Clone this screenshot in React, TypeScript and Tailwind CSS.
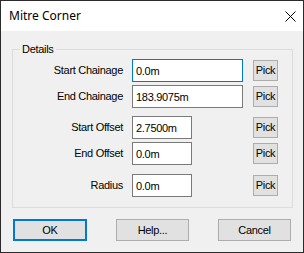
import React from "react";

function Row({
  label,
  value,
  wide,
  focused,
  className,
}: {
  label: string;
  value: string;
  wide?: boolean;
  focused?: boolean;
  className?: string;
}) {
  return (
    <div className={"flex items-center h-[23px] " + (className ?? "")}>
      <div className="w-[110px] text-right leading-[13px]">{label}</div>
      <div className="ml-[9px] w-[121px] h-[23px] flex">
        <input
          readOnly
          value={value}
          className={
            "h-[23px] pl-[3px] bg-white outline-none leading-[13px] text-[11px] tracking-[-0.3px] text-black border " +
            (wide ? "w-[111px] " : "w-[60px] ") +
            (focused ? "border-[#0078d7]" : "border-[#7a7a7a]")
          }
        />
      </div>
      <button className="w-[25px] h-[21px] bg-[#e1e1e1] border border-[#adadad] flex items-center justify-center leading-[13px] text-[11px] tracking-[-0.3px]">
        Pick
      </button>
    </div>
  );
}

export default function App() {
  return (
    <div className="w-[304px] h-[253px] border border-[#2b2b2b] bg-[#f0f0f0] flex flex-col text-[11px] tracking-[-0.3px] text-black font-['Liberation_Sans',Arial,sans-serif]">
      <div className="h-[30px] bg-white flex items-center justify-between pl-[8px] pr-[7px] shrink-0">
        <span className="text-[12px] tracking-normal font-['Noto_Sans',sans-serif] leading-[16px] text-black">
          Mitre Corner
        </span>
        <svg width="11" height="11" viewBox="0 0 11 11" className="text-black">
          <path d="M0.5 0.5 L10.5 10.5 M10.5 0.5 L0.5 10.5" stroke="currentColor" strokeWidth="1" />
        </svg>
      </div>
      <div className="flex-1 px-[11px] pt-[18px]">
        <div className="relative w-[281px] h-[159px] border border-[#dcdcdc] pt-[9px]">
          <span className="absolute left-[7px] top-[-7px] px-[2px] bg-[#f0f0f0] leading-[13px]">
            Details
          </span>
          <Row label="Start Chainage" value="0.0m" wide focused />
          <Row label="End Chainage" value="183.9075m" wide className="mt-[3px]" />
          <Row label="Start Offset" value="2.7500m" className="mt-[8px]" />
          <Row label="End Offset" value="0.0m" className="mt-[3px]" />
          <Row label="Radius" value="0.0m" className="mt-[9px]" />
        </div>
        <div className="flex gap-[29px] pl-[1px] mt-[11px]">
          <button className="w-[74px] h-[22px] bg-[#e1e1e1] border-2 border-[#0078d7] flex items-center justify-center leading-[13px]">
            OK
          </button>
          <button className="w-[73px] h-[22px] bg-[#e1e1e1] border border-[#adadad] flex items-center justify-center leading-[13px]">
            Help...
          </button>
          <button className="w-[73px] h-[22px] bg-[#e1e1e1] border border-[#adadad] flex items-center justify-center leading-[13px]">
            Cancel
          </button>
        </div>
      </div>
    </div>
  );
}
